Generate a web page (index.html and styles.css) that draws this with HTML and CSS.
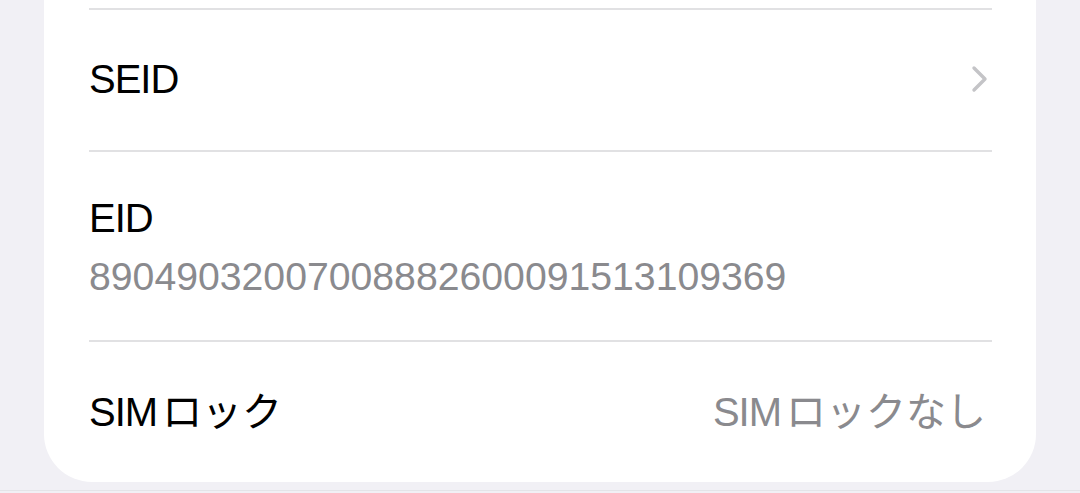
FILE: index.html
```html
<!DOCTYPE html>
<html lang="ja">
<head>
  <meta charset="UTF-8"/>
  <meta name="viewport" content="width=device-width,initial-scale=1.0"/>
  <title>情報</title>
  <link rel="stylesheet" href="styles.css">
</head>
<body>
  <main class="page">
    <section class="group">
      <div class="row row-link">
        <span class="label">SEID</span>
        <svg class="chevron" width="18" height="28" viewBox="0 0 18 28">
          <path d="M3 3 L14 14 L3 25" fill="none" stroke="#c4c4c7" stroke-width="3.4" stroke-linecap="round" stroke-linejoin="round"/>
        </svg>
      </div>
      <div class="row row-stack">
        <span class="label">EID</span>
        <span class="sub">89049032007008882600091513109369</span>
      </div>
      <div class="row row-last">
        <span class="label jp">SIM<span class="kana">ロック</span></span>
        <span class="value jp">SIM<span class="kana">ロックなし</span></span>
      </div>
    </section>
  </main>
</body>
</html>
```

FILE: styles.css
```css
:root {
  --bg: #f1f0f5; --card: #fff; --text: #000;
  --muted: #8a8a8e; --sep: #e1e1e3;
}
* { box-sizing:border-box; margin:0; padding:0; }
html, body { height:100%; }
body {
  background: var(--bg); color: var(--text);
  font-family: "Liberation Sans", Arial, "Noto Sans CJK JP", sans-serif;
  overflow:hidden;
}
.page {
  height:491px; padding:0 44px 0 44px;
  border-bottom:1px solid #e4e4e8;
}
.group {
  background: var(--card);
  height:482px;
  border-radius:0 0 48px 48px;
  padding:8px 44px 0 45px;
  display:flex; flex-direction:column;
}
.row {
  border-top:2px solid var(--sep);
  display:flex; align-items:center; justify-content:space-between;
}
.label {
  font-size:40px; letter-spacing:-1px; line-height:1;
}
.row-link { height:142px; padding-bottom:2px; }
.chevron { margin-right:3px; }
.row-stack {
  height:190px;
  flex-direction:column; align-items:flex-start; justify-content:center;
  gap:19px; padding-top:2px;
}
.sub {
  font-size:39.2px; color: var(--muted); line-height:1;
}
.row-last { height:140px; padding-top:2px; }
.value {
  font-size:40px; letter-spacing:-1px; color: var(--muted); line-height:1;
  margin-right:6px;
}
.jp .kana { margin-left:5px; letter-spacing:0; }
```
